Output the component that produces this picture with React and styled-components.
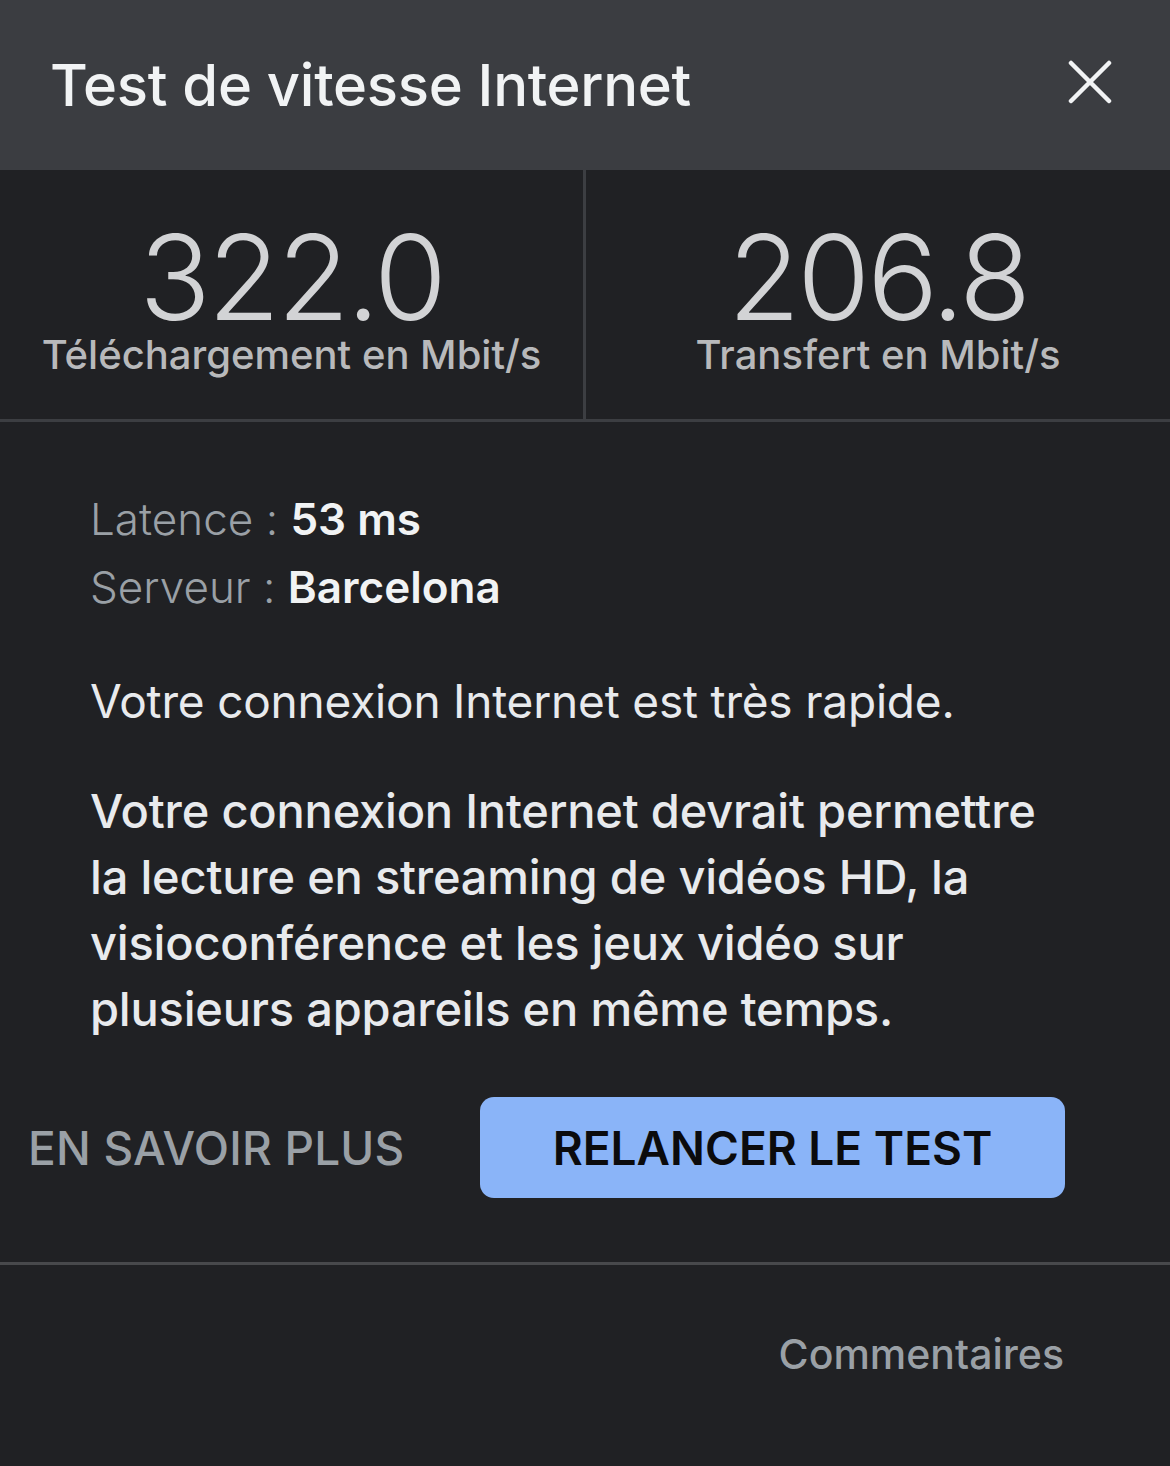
import React from 'react'
import styled, { createGlobalStyle } from 'styled-components'

const GlobalStyle = createGlobalStyle`
  html, body {
    margin: 0;
    padding: 0;
    background: #202124;
  }
  body {
    font-family: Inter, Roboto, "Noto Sans", sans-serif;
    -webkit-font-smoothing: antialiased;
  }
`

const App = () => {
  return (
    <Panel>
      <GlobalStyle />
      <Header>
        <Title>Test de vitesse Internet</Title>
        <CloseButton aria-label='Fermer'>
          <svg width='44' height='44' viewBox='0 0 44 44'>
            <path d='M3 3 L41 41 M41 3 L3 41' stroke='#f1f3f4' strokeWidth='4.5' strokeLinecap='round' />
          </svg>
        </CloseButton>
      </Header>

      <Stats>
        <Stat>
          <Value>322.0</Value>
          <Unit>Téléchargement en Mbit/s</Unit>
        </Stat>
        <Stat>
          <Value>206.8</Value>
          <Unit>Transfert en Mbit/s</Unit>
        </Stat>
      </Stats>

      <Details>
        <InfoList>
          <InfoRow>
            <InfoLabel>Latence : </InfoLabel>
            <InfoValue>53 ms</InfoValue>
          </InfoRow>
          <InfoRow>
            <InfoLabel>Serveur : </InfoLabel>
            <InfoValue>Barcelona</InfoValue>
          </InfoRow>
        </InfoList>
        <Summary>Votre connexion Internet est très rapide.</Summary>
        <Paragraph>
          Votre connexion Internet devrait permettre la lecture en streaming de vidéos HD, la
          visioconférence et les jeux vidéo sur plusieurs appareils en même temps.
        </Paragraph>
      </Details>

      <Actions>
        <TextButton>EN SAVOIR PLUS</TextButton>
        <PrimaryButton>RELANCER LE TEST</PrimaryButton>
      </Actions>

      <Footer>
        <FooterLink>Commentaires</FooterLink>
      </Footer>
    </Panel>
  )
}

const Panel = styled.div`
  width: 1170px;
  min-height: 1466px;
  background: #202124;
  color: #e8eaed;
`

const Header = styled.div`
  height: 170px;
  display: flex;
  align-items: flex-start;
  justify-content: space-between;
  padding: 0 58px 0 50px;
  box-sizing: border-box;
  background: #3b3d41;
`

const Title = styled.h1`
  margin: 50px 0 0;
  font-size: 58px;
  line-height: 70px;
  font-weight: 500;
  color: #f1f3f4;
  letter-spacing: -0.3px;
`

const CloseButton = styled.div`
  margin-top: 60px;
  width: 44px;
  height: 44px;
  cursor: pointer;
`

const Stats = styled.div`
  display: grid;
  grid-template-columns: 586px 1fr;
  height: 252px;
  border-bottom: 3px solid #3c3e42;
  box-sizing: border-box;
`

const Stat = styled.div`
  display: flex;
  flex-direction: column;
  align-items: center;
  padding-top: 55px;

  &:first-child {
    border-right: 3px solid #3c3e42;
  }
`

const Value = styled.div`
  font-size: 118px;
  font-weight: 300;
  line-height: 104px;
  color: #d2d3d5;
  letter-spacing: -3px;
`

const Unit = styled.div`
  margin-top: 4px;
  font-size: 40px;
  line-height: 44px;
  font-weight: 500;
  color: #b8b9bb;
`

const Details = styled.div`
  padding: 66px 90px 0;
`

const InfoList = styled.div`
  display: flex;
  flex-direction: column;
  gap: 6px;
`

const InfoRow = styled.div`
  font-size: 44px;
  line-height: 62px;
`

const InfoLabel = styled.span`
  font-weight: 300;
  color: #9aa0a6;
`

const InfoValue = styled.span`
  font-weight: 600;
  color: #f1f3f4;
`

const Summary = styled.p`
  margin: 50px 0 0;
  font-size: 46px;
  font-weight: 400;
  line-height: 66px;
  color: #e8eaed;
  letter-spacing: -0.2px;
`

const Paragraph = styled.p`
  margin: 44px 0 0;
  max-width: 980px;
  font-size: 47px;
  font-weight: 500;
  line-height: 66px;
  color: #e8eaed;
  letter-spacing: -0.2px;
`

const Actions = styled.div`
  display: flex;
  align-items: center;
  justify-content: space-between;
  padding: 55px 105px 0 28px;
`

const TextButton = styled.div`
  font-size: 46px;
  font-weight: 500;
  color: #9aa0a6;
  letter-spacing: 0.2px;
  cursor: pointer;
`

const PrimaryButton = styled.button`
  width: 585px;
  height: 101px;
  border: none;
  border-radius: 14px;
  background: #8ab4f8;
  color: #0b0b0d;
  font-family: Inter, Roboto, "Noto Sans", sans-serif;
  font-size: 46px;
  font-weight: 600;
  cursor: pointer;
`

const Footer = styled.div`
  margin-top: 64px;
  border-top: 3px solid #48494c;
  display: flex;
  justify-content: flex-end;
  padding: 64px 106px 0;
`

const FooterLink = styled.div`
  font-size: 41px;
  font-weight: 500;
  color: #9aa0a6;
  cursor: pointer;
`

export default App
